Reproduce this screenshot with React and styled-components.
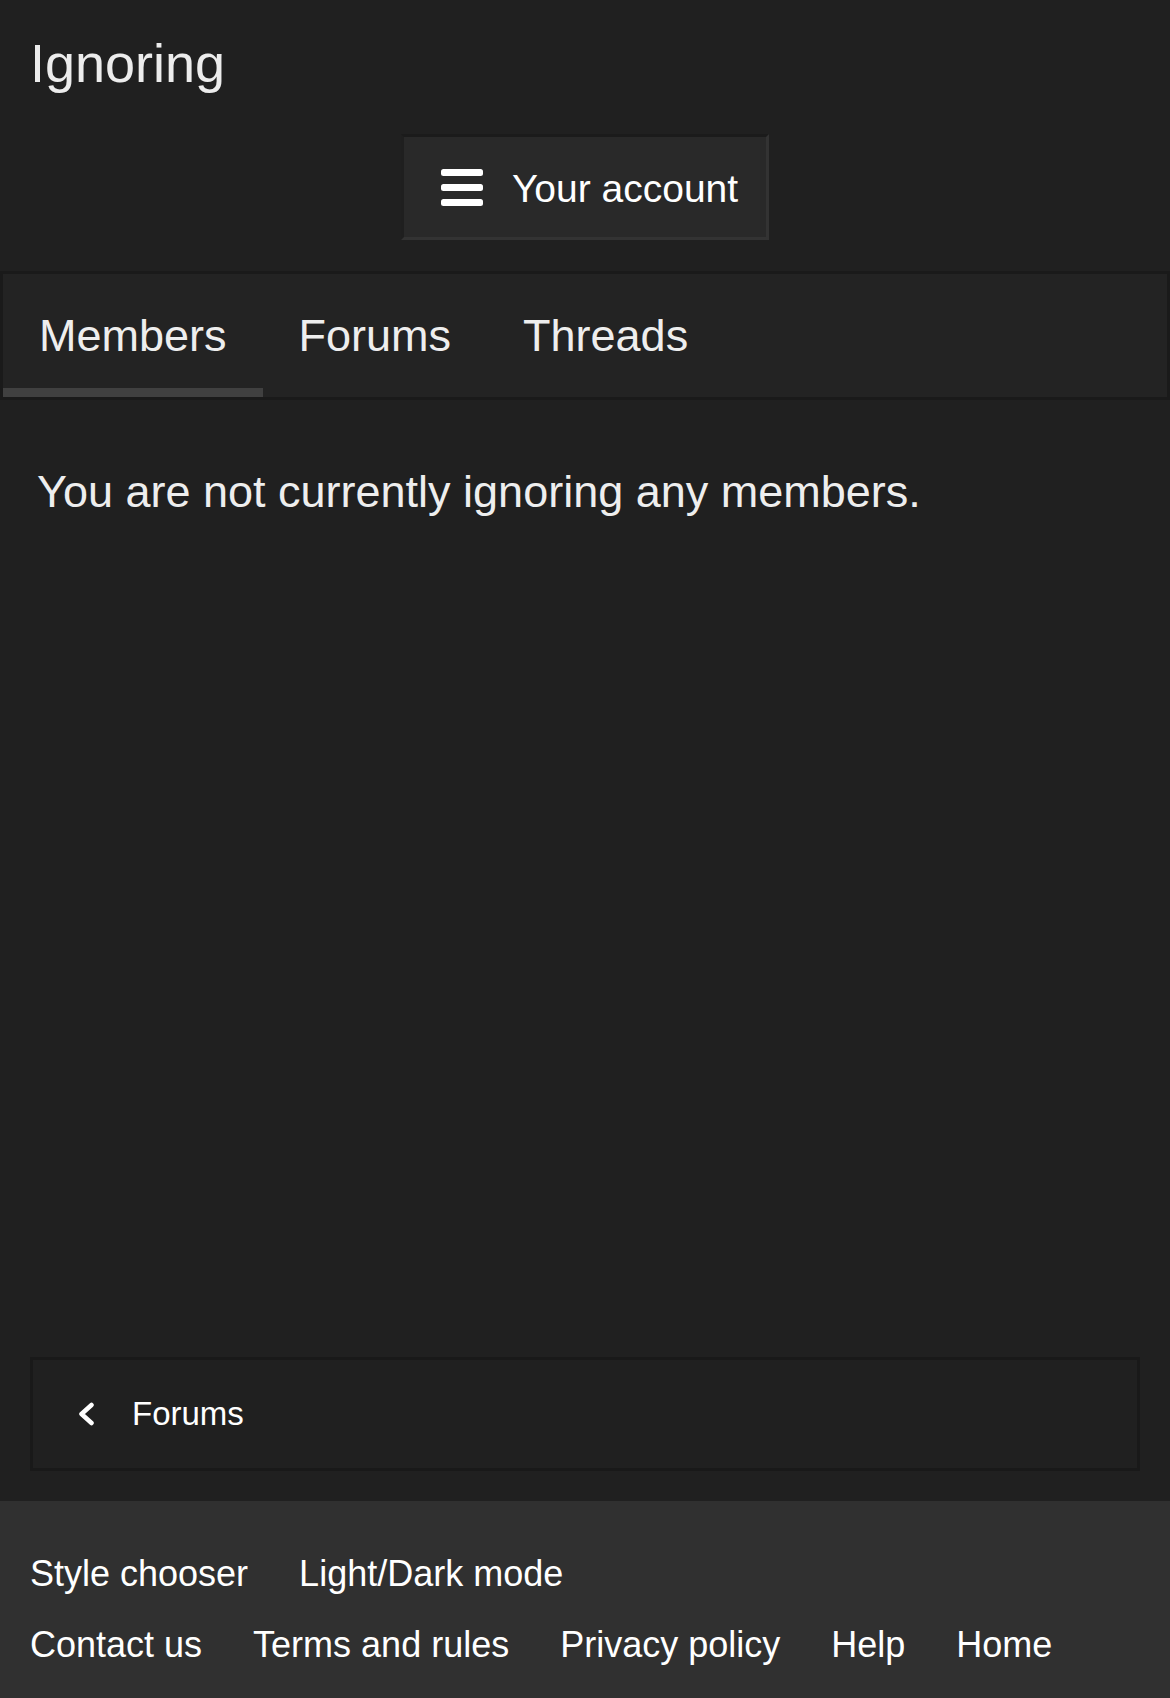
import React from 'react';
import styled, { createGlobalStyle } from 'styled-components';

const GlobalStyle = createGlobalStyle`
    html, body {
        margin: 0;
        padding: 0;
        background: #202020;
    }
    body {
        font-family: "Liberation Sans", Arial, sans-serif;
        color: #ececec;
    }
`

const Page = styled.div`
    min-height: 100vh;
    display: flex;
    flex-direction: column;
`
const Header = styled.header`
    padding: 32px 30px 0;
`
const Title = styled.h1`
    margin: 0;
    font-size: 54px;
    font-weight: 400;
    line-height: 62px;
    color: #ececec;
`
const ButtonRow = styled.div`
    display: flex;
    justify-content: center;
    padding: 40px 0 31px;
`
const AccountButton = styled.button`
    display: flex;
    align-items: center;
    gap: 29px;
    height: 106px;
    padding: 0 28px 0 37px;
    background: #292929;
    border: 3px solid #333333;
    border-top-color: #1b1b1b;
    border-left-color: #1f1f1f;
    color: #ffffff;
    font-family: inherit;
    font-size: 39px;
    cursor: pointer;
`
const ButtonLabel = styled.span`
    padding-top: 4px;
`
const Tabs = styled.nav`
    display: flex;
    background: #232323;
    border: 3px solid #1a1a1a;
`
const Tab = styled.a`
    display: flex;
    align-items: center;
    height: 104px;
    padding: 10px 36px 0;
    font-size: 45px;
    color: #eeeeee;
    border-bottom: 9px solid ${p => p.active ? '#404040' : 'transparent'};
`
const Main = styled.main`
    flex: 1;
    display: flex;
    flex-direction: column;
    justify-content: space-between;
`
const Message = styled.p`
    margin: 0;
    padding: 66px 37px 0;
    font-size: 45px;
    color: #eeeeee;
`
const Breadcrumb = styled.div`
    display: flex;
    align-items: center;
    gap: 37px;
    height: 108px;
    margin: 0 30px 30px;
    padding-left: 45px;
    border: 3px solid #191919;
    font-size: 33px;
    color: #ffffff;
`
const Footer = styled.footer`
    background: #303030;
    padding: 37px 30px 18px;
`
const LinkRow = styled.div`
    display: flex;
    gap: 51px;
    height: 71px;
    line-height: 71px;
    font-size: 36px;
    color: #ffffff;
`

function BarsIcon() {
    return (
        <svg width="42" height="37" viewBox="0 0 42 37">
            <rect x="0" y="0" width="42" height="7" rx="2.5" fill="#fff" />
            <rect x="0" y="15" width="42" height="7" rx="2.5" fill="#fff" />
            <rect x="0" y="30" width="42" height="7" rx="2.5" fill="#fff" />
        </svg>
    )
}

function ChevronLeft() {
    return (
        <svg width="17" height="24" viewBox="0 0 17 24">
            <polyline points="13.5,3 3.5,12 13.5,21" fill="none" stroke="#fff" strokeWidth="4.5" strokeLinecap="round" strokeLinejoin="round" />
        </svg>
    )
}

function App() {
    return (
        <Page>
            <GlobalStyle />
            <Header>
                <Title>Ignoring</Title>
            </Header>
            <ButtonRow>
                <AccountButton>
                    <BarsIcon />
                    <ButtonLabel>Your account</ButtonLabel>
                </AccountButton>
            </ButtonRow>
            <Tabs>
                <Tab active>Members</Tab>
                <Tab>Forums</Tab>
                <Tab>Threads</Tab>
            </Tabs>
            <Main>
                <Message>You are not currently ignoring any members.</Message>
                <Breadcrumb>
                    <ChevronLeft />
                    <span>Forums</span>
                </Breadcrumb>
            </Main>
            <Footer>
                <LinkRow>
                    <span>Style chooser</span>
                    <span>Light/Dark mode</span>
                </LinkRow>
                <LinkRow>
                    <span>Contact us</span>
                    <span>Terms and rules</span>
                    <span>Privacy policy</span>
                    <span>Help</span>
                    <span>Home</span>
                </LinkRow>
            </Footer>
        </Page>
    )
}

export default App;
